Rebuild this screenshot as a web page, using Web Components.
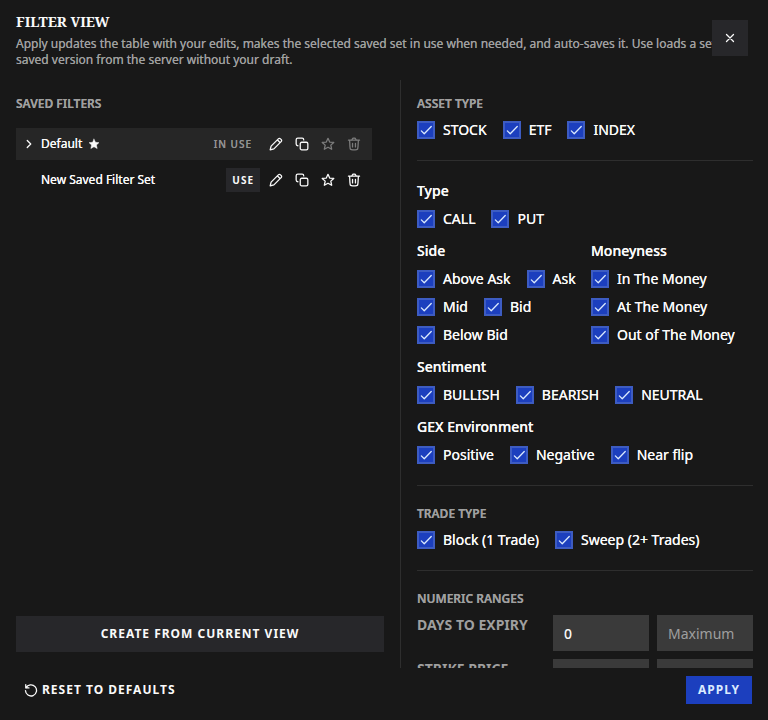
<!DOCTYPE html>
<html lang="en">
<head>
<meta charset="utf-8">
<meta name="viewport" content="width=device-width, initial-scale=1">
<title>Filter view</title>
<style>
  :root {
    --bg: #181818;
    --surface: #27272a;
    --row: #262626;
    --field: #3a3a3a;
    --line: #2e2e2e;
    --muted: #9f9f9f;
    --text: #fafafa;
    --primary: #1c3fbe;
    --primary-edge: #3d5cc2;
    --on-primary: #dbeafe;
    --firm: 0 0 0 currentColor;
  }
  body {
    margin: 0;
    background: var(--bg);
    color: var(--text);
    font-family: "Noto Sans", sans-serif;
    font-size: 14px;
    line-height: 20px;
  }
</style>
</head>
<body>
<filter-dialog>
  <span slot="title">FILTER VIEW</span>
  <span slot="description">Apply updates the table with your edits, makes the selected saved set in use when needed, and auto-saves it. Use loads a set's saved version from the server without your draft.</span>

  <section-title slot="saved">SAVED FILTERS</section-title>
  <saved-filter slot="saved" name="Default" active></saved-filter>
  <saved-filter slot="saved" name="New Saved Filter Set"></saved-filter>
  <ui-button slot="create" kind="block">CREATE FROM CURRENT VIEW</ui-button>

  <filter-section slot="filters" heading="ASSET TYPE">
    <check-group>
      <check-option>STOCK</check-option><check-option>ETF</check-option><check-option>INDEX</check-option>
    </check-group>
  </filter-section>
  <filter-section slot="filters">
    <check-group heading="Type">
      <check-option>CALL</check-option><check-option>PUT</check-option>
    </check-group>
    <split-pair>
      <check-group heading="Side">
        <check-option>Above Ask</check-option><check-option>Ask</check-option><check-option>Mid</check-option><check-option>Bid</check-option><check-option>Below Bid</check-option>
      </check-group>
      <check-group heading="Moneyness">
        <check-option>In The Money</check-option><check-option>At The Money</check-option><check-option>Out of The Money</check-option>
      </check-group>
    </split-pair>
    <check-group heading="Sentiment">
      <check-option>BULLISH</check-option><check-option>BEARISH</check-option><check-option>NEUTRAL</check-option>
    </check-group>
    <check-group heading="GEX Environment">
      <check-option>Positive</check-option><check-option>Negative</check-option><check-option>Near flip</check-option>
    </check-group>
  </filter-section>
  <filter-section slot="filters" heading="TRADE TYPE">
    <check-group>
      <check-option>Block (1 Trade)</check-option><check-option>Sweep (2+ Trades)</check-option>
    </check-group>
  </filter-section>
  <filter-section slot="filters" heading="NUMERIC RANGES">
    <range-field label="DAYS TO EXPIRY" min="0"></range-field>
    <range-field label="STRIKE PRICE"></range-field>
  </filter-section>

  <ui-button slot="footer" kind="ghost"><ui-icon name="reset" size="14"></ui-icon>RESET TO DEFAULTS</ui-button>
  <ui-button slot="footer" kind="primary">APPLY</ui-button>
</filter-dialog>

<script>
const define = (name, html, setup) => {
  const template = document.createElement('template');
  template.innerHTML = html;
  customElements.define(name, class extends HTMLElement {
    constructor() {
      super();
      this.attachShadow({ mode: 'open' }).append(template.content.cloneNode(true));
    }
    connectedCallback() {
      if (setup && !this.ready) { this.ready = true; setup(this, this.shadowRoot); }
    }
  });
};

const ICONS = {
  close: '<path d="M18 6 6 18M6 6l12 12"/>',
  chevron: '<path d="m9 6 6 6-6 6"/>',
  check: '<path d="m4 13.500 5 5L21 6"/>',
  pencil: '<path d="M2 22 3.600 15.600 16 3.200c1.200-1.200 2.700-1.200 3.800 0l1 1c1.200 1.200 1.200 2.700 0 3.800L8.400 20.400 2 22ZM15 5.500l3.500 3.500"/>',
  copy: '<rect x="9" y="9" width="13" height="13" rx="2.500"/><path d="M5 15c-2 0-3-1-3-2.800V4.800C2 3 3 2 4.800 2h7.400C14 2 15 3 15 5"/>',
  star: '<path d="M12 2.300 14.900 8.600 21.900 9.300 16.800 13.900 18.300 21 12 17.500 5.700 21 7.200 13.900 2.100 9.300 9.100 8.600Z"/>',
  trash: '<path d="m19.500 5.500-.6 10.600c-.2 2.700-.3 4-1 4.900-.8 1-1.800 1-3.900 1h-4c-2.100 0-3.200 0-4-1-.7-.9-.8-2.200-1-4.900L4.500 5.500M2.500 5.500h19M8 5.500l1-2c.5-1.200 1-1.500 2.200-1.500h1.600c1.200 0 1.700.3 2.200 1.500l1 2"/><path d="M9.500 11v6M14.500 11v6"/>',
  reset: '<path d="M3 3v5.500h5.500M3.500 8.500A9.500 9.500 0 1 1 2.500 13"/>'
};

define('ui-icon', `
  <style>
    :host { display: inline-flex; flex: none; }
    svg { display: block; fill: none; stroke: currentColor; stroke-width: 2.2; stroke-linecap: round; stroke-linejoin: round; }
    :host([filled]) svg { fill: currentColor; stroke-width: 1; }
  </style>
  <svg viewBox="0 0 24 24" aria-hidden="true"></svg>`,
  (el, root) => {
    const svg = root.querySelector('svg');
    const size = el.getAttribute('size') || 14;
    svg.setAttribute('width', size);
    svg.setAttribute('height', size);
    svg.innerHTML = ICONS[el.getAttribute('name')];
  });

define('ui-button', `
  <style>
    :host { display: inline-block; }
    :host([kind="block"]) { display: block; }
    button {
      display: flex; align-items: center; justify-content: center; gap: 4px;
      height: 28px; padding: 0 8px; border: 0; border-radius: 0;
      background: none; color: var(--text);
      font: 700 12px/16px "Noto Sans", sans-serif; letter-spacing: 1px; cursor: pointer;
    }
    :host([kind="block"]) button { width: 100%; height: 36px; background: var(--surface); }
    :host([kind="primary"]) button { padding: 0 12px; background: var(--primary); color: var(--on-primary); }
    :host([kind="small"]) button { height: 24px; padding: 0 6px; background: var(--surface); font-size: 10px; }
  </style>
  <button type="button"><slot></slot></button>`);

define('icon-button', `
  <style>
    :host { display: block; }
    button {
      display: grid; place-items: center; width: 24px; height: 24px;
      padding: 0; border: 0; background: none; color: var(--text); cursor: pointer;
    }
    button:disabled { color: #7c7c7c; cursor: default; }
    :host([boxed]) button { width: 36px; height: 36px; background: var(--surface); }
  </style>
  <button type="button"><slot></slot></button>`,
  (el, root) => {
    const button = root.querySelector('button');
    button.setAttribute('aria-label', el.getAttribute('label'));
    button.disabled = el.hasAttribute('disabled');
  });

define('section-title', `
  <style>
    :host { display: block; }
    h3 { margin: 0; color: var(--muted); font: 600 12px/16px "Noto Sans", sans-serif; text-shadow: var(--firm); }
  </style>
  <h3><slot></slot></h3>`);

define('saved-filter', `
  <style>
    :host { display: flex; align-items: center; height: 32px; padding: 0 6px 0 5px; margin-right: 12px; }
    :host([active]) { background: var(--row); }
    .lead { display: grid; place-items: center; width: 16px; margin-right: 4px; }
    .name { display: flex; align-items: center; gap: 6px; flex: 1; min-width: 0; font-size: 12px; line-height: 16px; font-weight: 400; text-shadow: var(--firm); white-space: nowrap; }
    .state { display: flex; align-items: center; }
    .status { padding: 0 8px; color: #919191; font-size: 10px; line-height: 16px; font-weight: 500; letter-spacing: 1px; text-shadow: var(--firm); }
    .actions { display: flex; gap: 2px; margin-left: 4px; }
  </style>
  <span class="lead"></span>
  <span class="name"></span>
  <span class="state"></span>
  <span class="actions">
    <icon-button label="Rename"><ui-icon name="pencil"></ui-icon></icon-button>
    <icon-button label="Duplicate"><ui-icon name="copy"></ui-icon></icon-button>
    <icon-button class="own" label="Make default"><ui-icon name="star"></ui-icon></icon-button>
    <icon-button class="own" label="Delete"><ui-icon name="trash"></ui-icon></icon-button>
  </span>`,
  (el, root) => {
    const active = el.hasAttribute('active');
    root.querySelector('.name').textContent = el.getAttribute('name');
    if (active) {
      root.querySelector('.lead').innerHTML = '<ui-icon name="chevron" size="14"></ui-icon>';
      root.querySelector('.name').insertAdjacentHTML('beforeend', '<ui-icon name="star" size="12" filled></ui-icon>');
      root.querySelectorAll('.own').forEach(b => b.shadowRoot.querySelector('button').disabled = true);
      root.querySelector('.state').innerHTML = '<span class="status">IN USE</span>';
    } else {
      root.querySelector('.state').innerHTML = '<ui-button kind="small">USE</ui-button>';
    }
  });

define('check-option', `
  <style>
    :host { display: block; }
    label { display: flex; align-items: center; gap: 8px; font-weight: 400; text-shadow: var(--firm); white-space: nowrap; cursor: pointer; }
    .box { display: grid; place-items: center; }
    input, ui-icon { grid-area: 1 / 1; }
    input { appearance: none; box-sizing: border-box; width: 18px; height: 18px; margin: 0; border: 2px solid var(--primary-edge); background: none; }
    input:checked { background: var(--primary); }
    ui-icon { color: var(--on-primary); pointer-events: none; }
    input:not(:checked) + ui-icon { visibility: hidden; }
  </style>
  <label><span class="box"><input type="checkbox" checked><ui-icon name="check" size="14"></ui-icon></span><span><slot></slot></span></label>`);

define('check-group', `
  <style>
    :host { display: block; }
    fieldset { margin: 0; padding: 0; border: 0; min-width: 0; }
    legend { display: block; padding: 0 0 8px; font-weight: 500; text-shadow: var(--firm); }
    .options { display: flex; flex-wrap: wrap; gap: 8px 16px; }
  </style>
  <fieldset><div class="options"><slot></slot></div></fieldset>`,
  (el, root) => {
    if (!el.hasAttribute('heading')) return;
    const legend = document.createElement('legend');
    legend.textContent = el.getAttribute('heading');
    root.querySelector('fieldset').prepend(legend);
  });

define('split-pair', `
  <style>
    :host { display: grid; grid-template-columns: minmax(0, 162px) 1fr; gap: 12px; }
  </style>
  <slot></slot>`);

define('filter-section', `
  <style>
    :host { display: block; padding: 20px 0; border-bottom: 1px solid var(--line); }
    :host(:first-of-type) { padding-top: 16px; }
    section-title { margin-bottom: 8px; }
    .content { display: grid; gap: 12px; }
    :host([heading="NUMERIC RANGES"]) .content { gap: 8px; }
  </style>
  <div class="content"><slot></slot></div>`,
  (el, root) => {
    if (!el.hasAttribute('heading')) return;
    const title = document.createElement('section-title');
    title.textContent = el.getAttribute('heading');
    root.querySelector('.content').before(title);
  });

define('range-field', `
  <style>
    :host { display: grid; grid-template-columns: 1fr 96px 96px; gap: 8px; }
    label { color: var(--muted); font-weight: 700; }
    input {
      box-sizing: border-box; width: 100%; height: 36px; padding: 0 11px; border: 0; border-radius: 0;
      background: var(--field); color: var(--text); font: 500 14px/20px "Noto Sans", sans-serif;
    }
    input::placeholder { color: var(--muted); font-weight: 400; opacity: 1; }
  </style>
  <label for="min"></label>
  <input id="min" inputmode="numeric" placeholder="Minimum">
  <input id="max" inputmode="numeric" placeholder="Maximum">`,
  (el, root) => {
    const label = el.getAttribute('label');
    root.querySelector('label').textContent = label;
    root.querySelector('#min').value = el.getAttribute('min') || '';
    root.querySelector('#max').setAttribute('aria-label', label + ' maximum');
  });

define('filter-dialog', `
  <style>
    :host { display: grid; grid-template-rows: auto minmax(0, 1fr) auto; height: 100vh; position: relative; }
    header { padding: 12px 16px; }
    h2 { margin: 0 0 4px; font: 700 14px/20px "Noto Serif", "Liberation Serif", serif; }
    p { margin: 0; color: var(--muted); font-size: 12px; line-height: 16px; text-shadow: var(--firm); }
    .close { position: absolute; top: 20px; right: 20px; }
    main { display: grid; grid-template-columns: 400fr 368fr; min-height: 0; }
    .saved { display: flex; flex-direction: column; min-height: 0; padding: 16px; }
    .list { display: flex; flex-direction: column; gap: 4px; flex: 1; min-height: 0; overflow: auto; }
    ::slotted(section-title) { margin-bottom: 12px; }
    .filters { min-width: 0; min-height: 0; overflow-y: auto; scrollbar-width: none; padding: 0 15px 0 16px; border-left: 1px solid var(--line); }
    footer { display: flex; align-items: center; justify-content: space-between; padding: 8px 16px 16px; }
  </style>
  <header>
    <h2><slot name="title"></slot></h2>
    <p><slot name="description"></slot></p>
  </header>
  <main>
    <div class="saved">
      <div class="list"><slot name="saved"></slot></div>
      <slot name="create"></slot>
    </div>
    <div class="filters"><slot name="filters"></slot></div>
  </main>
  <footer><slot name="footer"></slot></footer>
  <icon-button class="close" boxed label="Close"><ui-icon name="close" size="14"></ui-icon></icon-button>`);
</script>
</body>
</html>
